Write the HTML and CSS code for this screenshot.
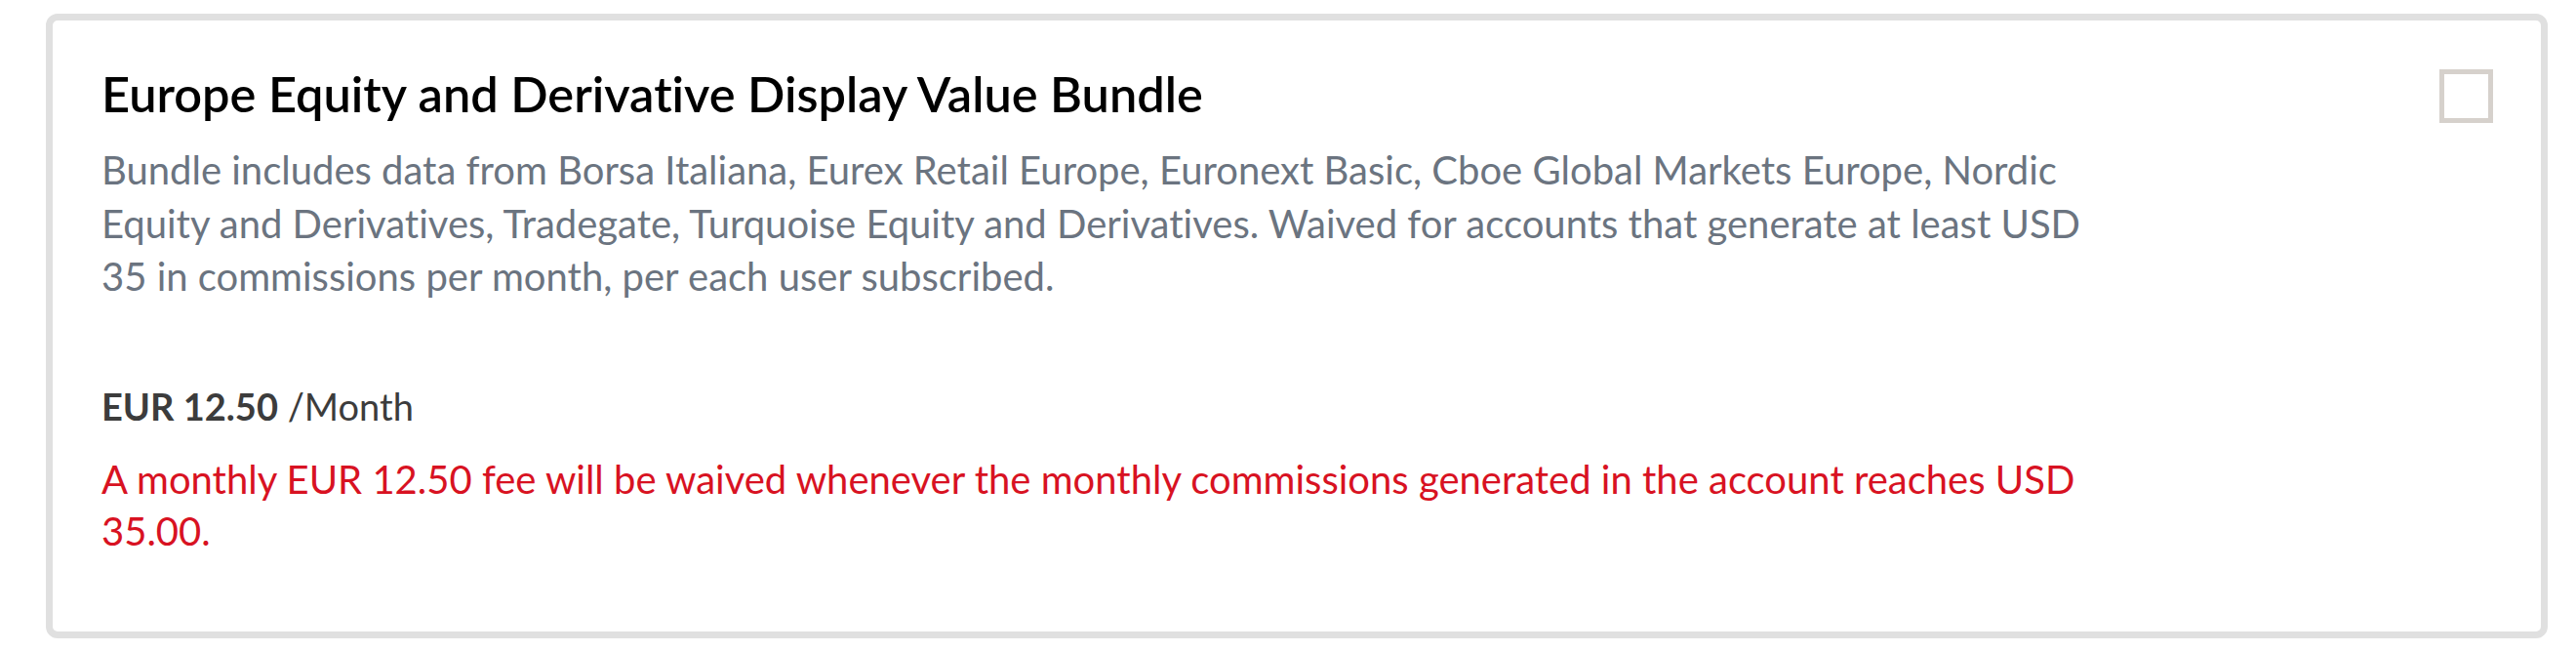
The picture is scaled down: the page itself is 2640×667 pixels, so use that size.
FILE: index.html
```html
<!DOCTYPE html>
<html lang="en">
<head>
<meta charset="utf-8">
<title>Europe Equity and Derivative Display Value Bundle</title>
<link rel="stylesheet" href="styles.css">
</head>
<body>
  <div class="card">
    <div class="card-body">
      <h2 class="title">Europe Equity and Derivative Display Value Bundle</h2>
      <p class="desc">Bundle includes data from Borsa Italiana, Eurex Retail Europe, Euronext Basic, Cboe Global Markets Europe, Nordic Equity and Derivatives, Tradegate, Turquoise Equity and Derivatives. Waived for accounts that generate at least USD 35 in commissions per month, per each user subscribed.</p>
      <p class="price"><strong>EUR 12.50</strong> /Month</p>
      <p class="waiver">A monthly EUR 12.50 fee will be waived whenever the monthly commissions generated in the account reaches USD 35.00.</p>
    </div>
    <div class="checkbox" role="checkbox" aria-checked="false"></div>
  </div>
</body>
</html>
```
FILE: styles.css
```css
html, body {
  margin: 0;
  padding: 0;
  background: #ffffff;
}

body {
  font-family: Lato, "Open Sans", sans-serif;
  font-variant-ligatures: none;
  padding: 14px 29px 0 47px;
}

.card {
  display: flex;
  align-items: flex-start;
  justify-content: space-between;
  height: 640px;
  box-sizing: border-box;
  border: 7px solid #e0e0e0;
  border-radius: 12px;
  padding: 50px 49px 50px 50px;
}

.card-body {
  max-width: 2080px;
}

.title {
  margin: 0;
  font-size: 50.5px;
  line-height: 50px;
  font-weight: 600;
  color: #000000;
}

.desc {
  margin: 26px 0 0;
  font-size: 40px;
  line-height: 54.5px;
  color: #6b7480;
}

.price {
  margin: 78px 0 0;
  font-size: 38px;
  line-height: 54px;
  color: #3c3c3c;
}

.price strong {
  font-weight: 700;
}

.waiver {
  margin: 22px 0 0;
  font-size: 40px;
  line-height: 53.5px;
  color: #d81222;
}

.checkbox {
  flex: 0 0 auto;
  width: 55px;
  height: 55px;
  box-sizing: border-box;
  border: 5px solid #d6d1cc;
  background: #ffffff;
}
```
